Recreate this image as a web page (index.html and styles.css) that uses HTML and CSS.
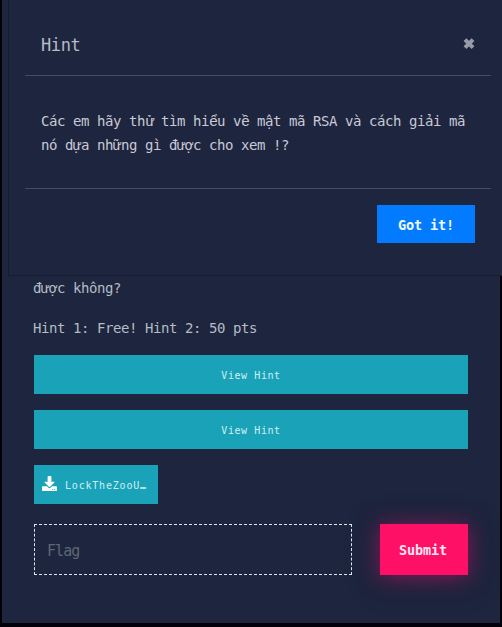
FILE: index.html
```html
<!DOCTYPE html>
<html lang="vi">
<head>
<meta charset="utf-8">
<title>Challenge</title>
<link rel="stylesheet" href="styles.css">
</head>
<body>
<main class="challenge">
  <p class="description">được không?</p>
  <p class="description">Hint 1: Free! Hint 2: 50 pts</p>
  <button class="hint-button">View Hint</button>
  <button class="hint-button">View Hint</button>
  <a class="download">
    <svg class="download-icon" viewBox="0 0 512 512"><path fill="currentColor" d="M216 0h80c13 0 24 11 24 24v168h88c18 0 27 21 14 34L270 378c-8 7-20 7-28 0L90 226c-13-13-4-34 14-34h88V24c0-13 11-24 24-24zm296 376v112c0 13-11 24-24 24H24c-13 0-24-11-24-24V376c0-13 11-24 24-24h147l49 49c20 20 52 20 72 0l49-49h147c13 0 24 11 24 24zM388 464c0-11-9-20-20-20s-20 9-20 20 9 20 20 20 20-9 20-20zm64 0c0-11-9-20-20-20s-20 9-20 20 9 20 20 20 20-9 20-20z"/></svg>
    <span>LockTheZooU<b>…</b></span>
  </a>
  <form class="flag-form">
    <input class="flag" type="text" placeholder="Flag">
    <button class="submit" type="button">Submit</button>
  </form>
</main>
<section class="modal">
  <header class="modal-header">
    <h1>Hint</h1>
    <svg class="close" viewBox="0 0 14 14"><path d="M3 2.6l8 8M11 2.6l-8 8"/></svg>
  </header>
  <div class="modal-body"><p>Các em hãy th<span class="accented">ử</span> tìm hi<span class="accented">ể</span>u v<span class="accented">ề</span> mật mã RSA và cách giải mã<br>nó dựa những gì được cho xem !?</p></div>
  <footer class="modal-footer"><button class="confirm">Got it!</button></footer>
</section>
</body>
</html>
```
FILE: styles.css
```css
* { box-sizing: border-box; }
body {
  margin: 0;
  height: 627px;
  padding: 0 2px 4px;
  overflow: hidden;
  background: #020109;
  color: #b4bcc5;
  font: 14px/24px "DejaVu Sans Mono", monospace;
  letter-spacing: -.43px;
}
p, h1 { margin: 0; font-weight: 400; }
button, input { font-family: inherit; border: 0; border-radius: 0; padding: 0; margin: 0; }
.challenge {
  height: 623px;
  padding: 276px 32px 0 31px;
  background: #1e253e;
  overflow: hidden;
}
.description { margin-bottom: 16px; }
.description + .hint-button { margin-top: -1px; }
.hint-button {
  display: block;
  width: 434px;
  height: 39px;
  margin: 0 0 16px 1px;
  padding-top: 1px;
  background: #1aa2b8;
  color: #d0f0f4;
  font-size: 10px;
  letter-spacing: .58px;
}
.download {
  display: flex;
  align-items: center;
  gap: 8px;
  width: 124px;
  height: 39px;
  margin-left: 1px;
  padding: 2px 0 0 8px;
  background: #1aa2b8;
  color: #d0f0f4;
  font-size: 10px;
  letter-spacing: .8px;
}
.download-icon { width: 15px; height: 15px; color: #fff; margin-top: -4px; }
.flag-form { display: flex; gap: 28px; margin: 20px 0 0 1px; }
.flag {
  width: 318px;
  height: 51px;
  padding: 3px 12px 0;
  border: 1px dashed #e0e4ed;
  background: transparent;
  font-size: 15px;
  letter-spacing: -.95px;
}
.flag::placeholder { color: #5c6775; opacity: 1; }
.submit {
  width: 88px;
  height: 51px;
  padding: 1px 2px 0 0;
  background: #ff1067;
  color: #ffe5f0;
  font-size: 13.5px;
  font-weight: 700;
  letter-spacing: -.13px;
  box-shadow: 0 2px 22px rgba(235, 16, 120, .55), 0 5px 30px rgba(18, 33, 48, .5);
}
.modal {
  position: absolute;
  top: 0;
  left: 8px;
  width: 494px;
  height: 276px;
  padding: 0 11px 0 16px;
  background: #1e253e;
  border-left: 1px solid #171c30;
  border-bottom: 1px solid #171c30;
}
.modal-header {
  display: flex;
  justify-content: space-between;
  height: 76px;
  padding: 33px 15px 0 16px;
  border-bottom: 1px solid #474d61;
}
.modal-header h1 { font-size: 17px; line-height: 24px; letter-spacing: -.4px; }
.close { width: 14px; height: 14px; margin-top: 4px; stroke: #989ba8; stroke-width: 4; fill: none; }
.modal-body { padding: 33px 0 0 16px; height: 112px; white-space: nowrap; color: #c9c9d6; }
.accented { font: 15px/1 "Liberation Mono", monospace; letter-spacing: -1px; }
.modal-footer {
  display: flex;
  justify-content: flex-end;
  padding: 16px 16px 0 0;
  border-top: 1px solid #474d61;
}
.confirm {
  width: 98px;
  height: 38px;
  padding-top: 1px;
  background: #027bff;
  color: #f0f8ff;
  font-size: 13.5px;
  font-weight: 700;
  letter-spacing: -.13px;
}
```
